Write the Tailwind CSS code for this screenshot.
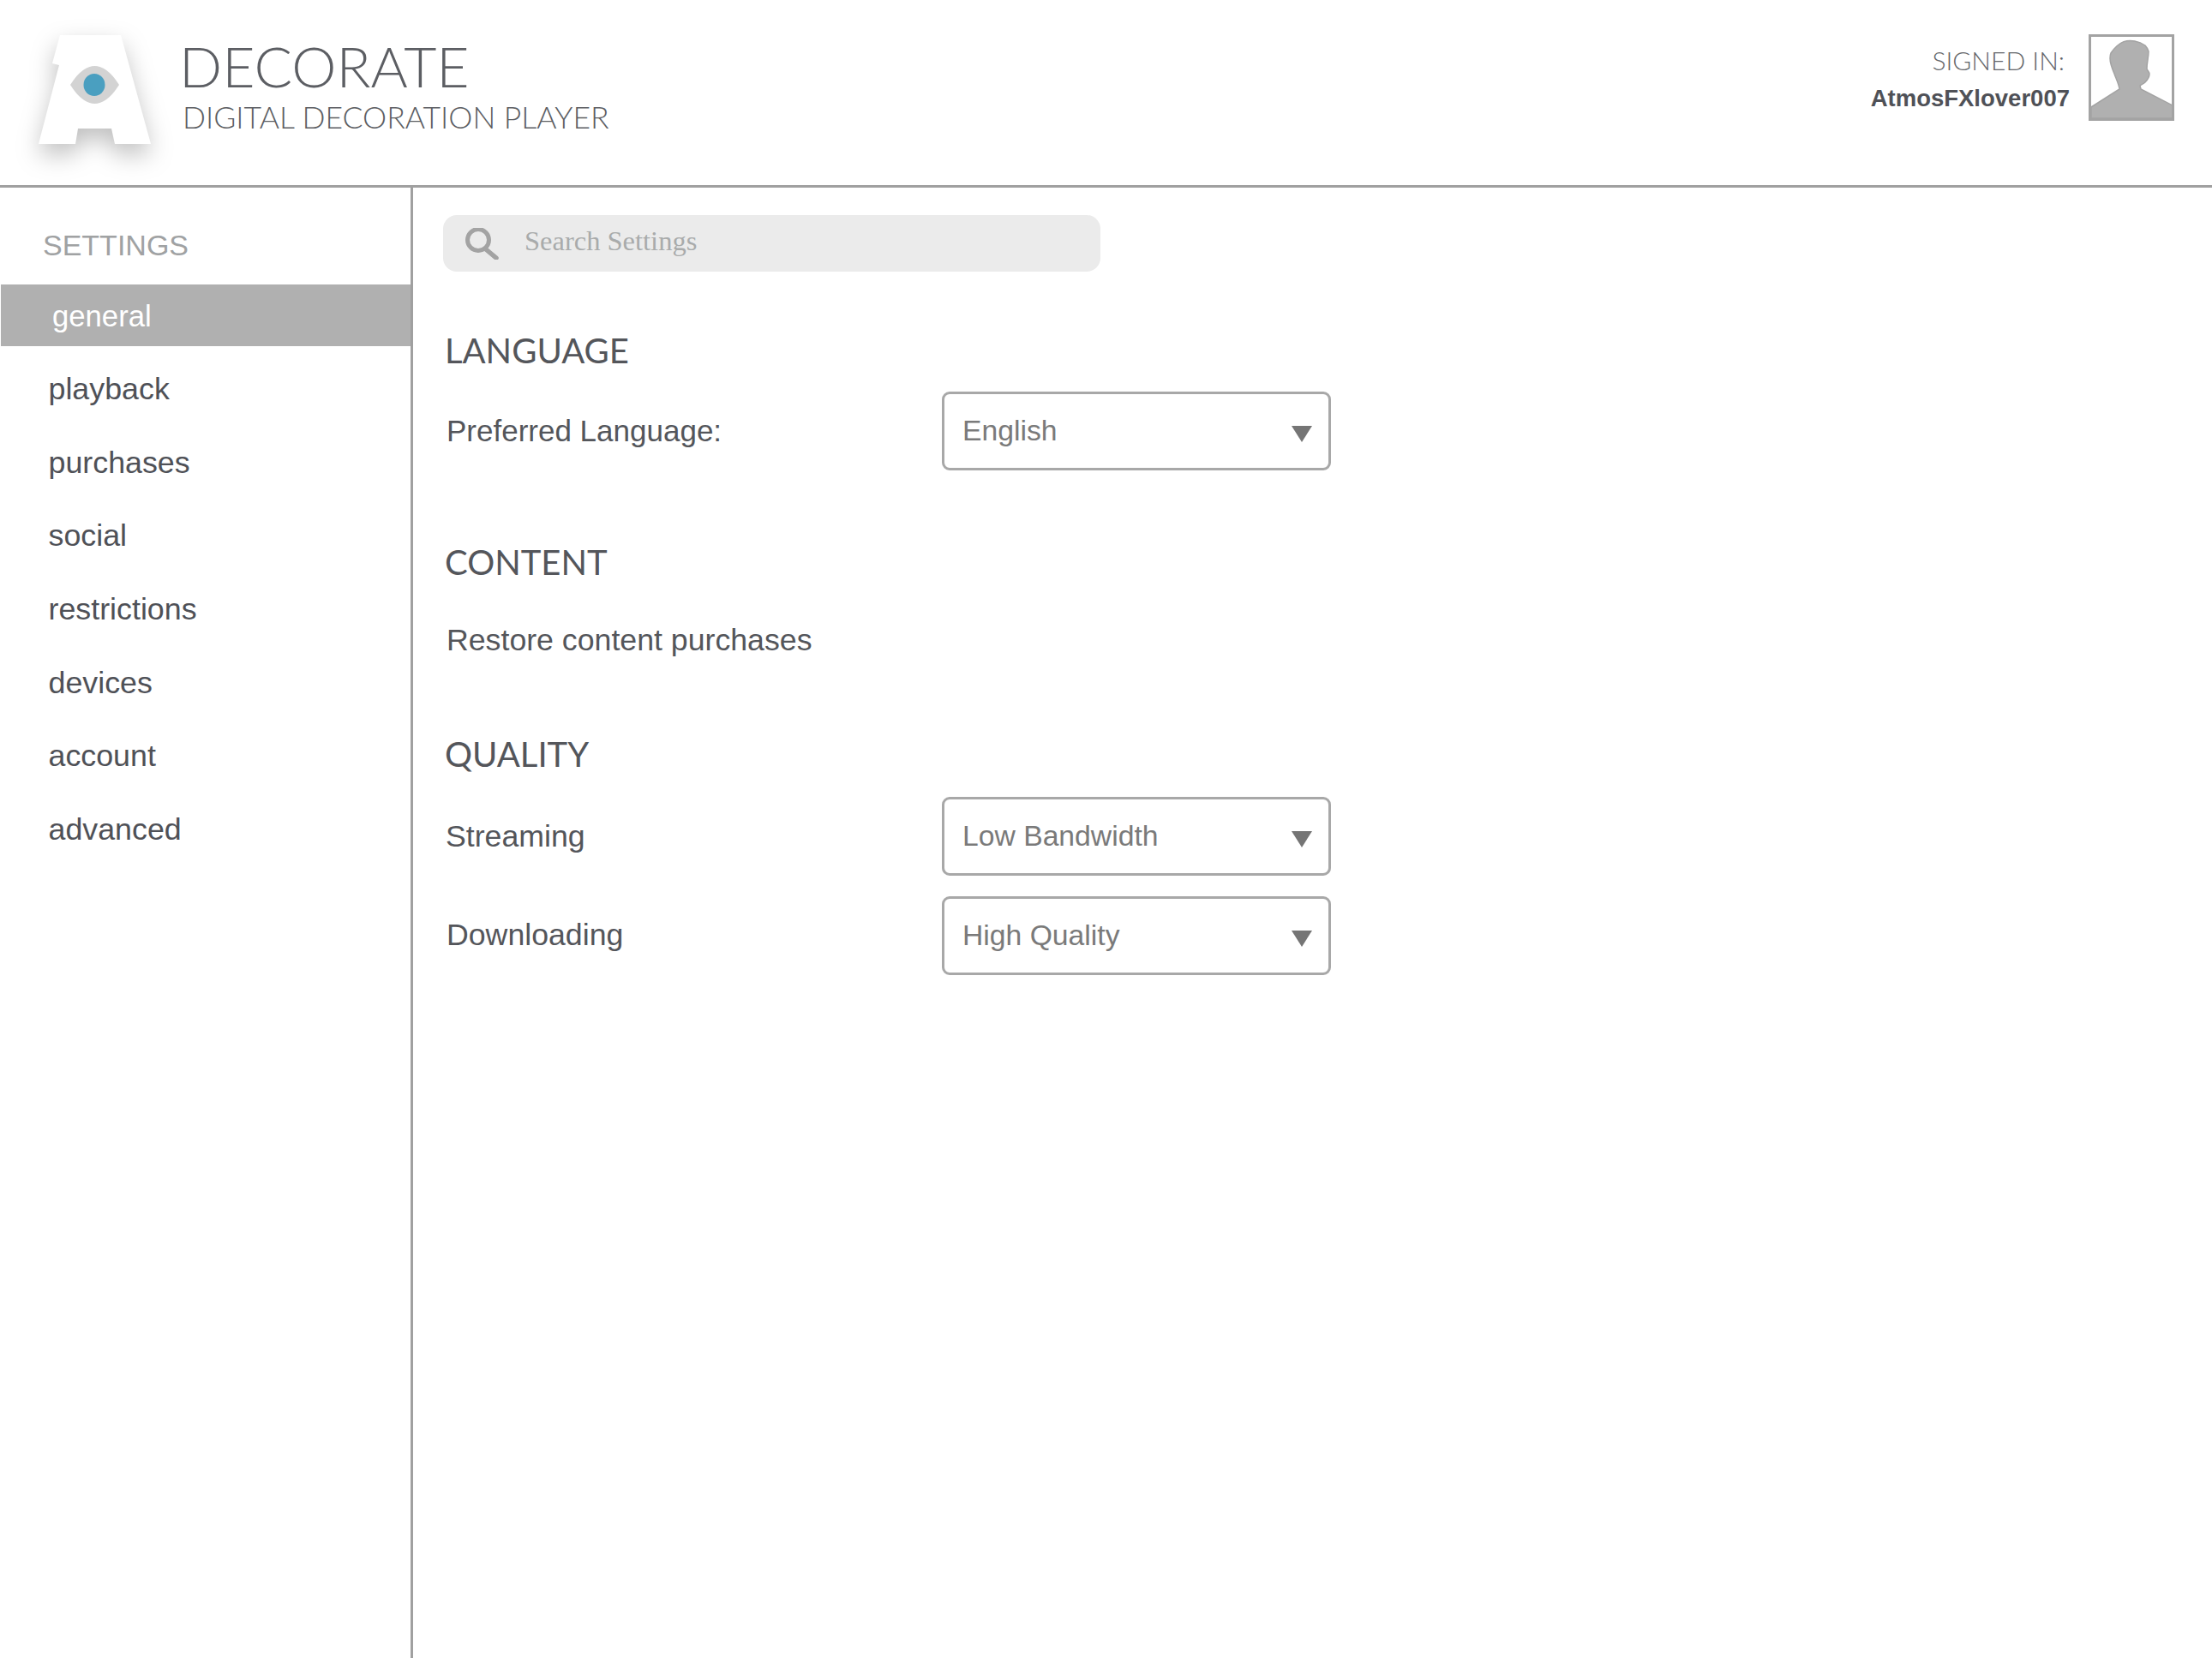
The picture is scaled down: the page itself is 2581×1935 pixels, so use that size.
<!doctype html>
<html><head><meta charset="utf-8"><script src="https://cdn.jsdelivr.net/npm/@tailwindcss/browser@4"></script></head>
<body class="bg-white">
<div class="w-[2581px] h-[1935px] flex flex-col overflow-hidden bg-white font-['Liberation_Sans',sans-serif] text-[#54565b]">
  <header class="h-[219px] shrink-0 border-b-[3px] border-[#a0a0a0] flex items-start">
    <div class="w-[209px] shrink-0 pt-[41px] pl-[45px]">
      <svg width="131" height="127" viewBox="0 0 131 127" class="overflow-visible drop-shadow-[0_12px_14px_rgba(0,0,0,0.25)]">
        <path d="M25 0H96L131 127H89L85 109H46L43 127H0L24 35L16 33Z" fill="#fff"/>
        <path d="M37 58C47 42 57 36 65.5 36C74 36 84 42 94 58C84 74 74 80 65.5 80C57 80 47 74 37 58Z" fill="#d3d3d3"/>
        <ellipse cx="65" cy="58" rx="12.5" ry="13" fill="#4a9fc0"/>
      </svg>
    </div>
    <div class="pt-[38px] font-['Lato',sans-serif] font-light">
      <div class="text-[66px] leading-[78px] text-[#5c5e63]">DECORATE</div>
      <div class="text-[35.5px] leading-[42px] text-[#5c5e63] pl-[4px]">DIGITAL DECORATION PLAYER</div>
    </div>
    <div class="ml-auto pt-[40px] pr-[44px] flex items-start gap-[22px]">
      <div class="flex flex-col items-end pt-[10px]">
        <div class="font-['Lato',sans-serif] font-light text-[30px] leading-[40px] pr-[6px] text-[#64666a]">SIGNED IN:</div>
        <div class="font-bold text-[27.5px] leading-[38px] text-[#4f5157] mt-[6px]">AtmosFXlover007</div>
      </div>
      <div class="w-[100px] h-[101px] border-[3px] border-[#a3a3a3] bg-white">
        <svg viewBox="0 0 94 95" width="94" height="95"><path d="M0 82L33 61C32 54 29 49 27 43C24 36 22 31 22 25C22 22 22 21 23 19C27 13 32 8 38 5.6C46 3 56 5 63 10C65 12 66 14 67 17C67 24 65 30 65 37C65 39 68 41 68 43C68 47 66 50 63 53C61 55 58 56 57 57L58 61L95 80V95H0Z" fill="#b0b0b0" stroke="#a3a3a3" stroke-width="1.5"/></svg>
      </div>
    </div>
  </header>
  <div class="flex flex-1 min-h-0">
    <aside class="w-[482px] shrink-0 border-r-[3px] border-[#a0a0a0]">
      <div class="h-[113px] pl-[50px] pt-[46px] text-[34px] leading-[42px] text-[#a0a2a3]">SETTINGS</div>
      <nav class="text-[35.8px] leading-[42px] text-[#4f5157]">
        <div class="h-[72px] ml-px bg-[#b0b0b0] text-white text-[34.7px] flex items-center pl-[60px] pt-[2px]">general</div>
        <div class="h-[85.6px] flex items-center pl-[56.5px] mt-[7px] pt-[1px]">playback</div>
        <div class="h-[85.6px] flex items-center pl-[56.5px] pt-[1px]">purchases</div>
        <div class="h-[85.6px] flex items-center pl-[56.5px] pt-[1px]">social</div>
        <div class="h-[85.6px] flex items-center pl-[56.5px] pt-[1px]">restrictions</div>
        <div class="h-[85.6px] flex items-center pl-[56.5px] pt-[1px]">devices</div>
        <div class="h-[85.6px] flex items-center pl-[56.5px] pt-[1px]">account</div>
        <div class="h-[85.6px] flex items-center pl-[56.5px] pt-[1px]">advanced</div>
      </nav>
    </aside>
    <main class="flex-1 pl-[35px]">
      <div class="w-[767px] h-[66px] mt-[32px] rounded-[16px] bg-[#ebebeb] flex items-center pl-[26px] gap-[30px]">
        <svg width="39" height="37" viewBox="0 0 39 37" fill="none" stroke="#a3a3a3"><circle cx="15" cy="14" r="12.5" stroke-width="5"/><path d="M24 25L36 35" stroke-width="5.5" stroke-linecap="round"/></svg>
        <span class="font-['Liberation_Serif',serif] text-[32.5px] text-[#a9abab] mb-[5px]">Search Settings</span>
      </div>
      <h2 class="font-['Lato',sans-serif] text-[40px] leading-[46px] font-normal mt-[69px] pl-[2px]">LANGUAGE</h2>
      <div class="flex items-center mt-[25px] h-[92px]">
        <div class="w-[582px] pl-[4px] text-[35px]">Preferred Language:</div>
        <div class="w-[454px] h-[92px] border-[3px] border-[#a8a8a8] rounded-[9px] flex items-center justify-between pl-[21px] pr-[19px] text-[33.7px] text-[#7a7a7a]"><span class="mb-[2px]">English</span><svg width="24" height="19" viewBox="0 0 24 19" class="mt-[6px]"><path d="M0 0H24L12 19Z" fill="#757575"/></svg></div>
      </div>
      <h2 class="font-['Lato',sans-serif] text-[40px] leading-[46px] font-normal mt-[84px] pl-[2px]">CONTENT</h2>
      <div class="pl-[4px] text-[35.7px] leading-[42px] mt-[47px]">Restore content purchases</div>
      <h2 class="font-['Lato',sans-serif] text-[40px] leading-[46px] font-normal mt-[89px] pl-[2px]">QUALITY</h2>
      <div class="flex items-center mt-[27px] h-[92px]">
        <div class="w-[582px] pl-[3px] text-[35.7px] pt-[1px]">Streaming</div>
        <div class="w-[454px] h-[92px] border-[3px] border-[#a8a8a8] rounded-[9px] flex items-center justify-between pl-[21px] pr-[19px] text-[33.7px] text-[#7a7a7a]"><span class="mb-[2px]">Low Bandwidth</span><svg width="24" height="19" viewBox="0 0 24 19" class="mt-[6px]"><path d="M0 0H24L12 19Z" fill="#757575"/></svg></div>
      </div>
      <div class="flex items-center mt-[24px] h-[92px]">
        <div class="w-[582px] pl-[4px] text-[35.7px]">Downloading</div>
        <div class="w-[454px] h-[92px] border-[3px] border-[#a8a8a8] rounded-[9px] flex items-center justify-between pl-[21px] pr-[19px] text-[33.7px] text-[#7a7a7a]"><span class="mb-[2px]">High Quality</span><svg width="24" height="19" viewBox="0 0 24 19" class="mt-[6px]"><path d="M0 0H24L12 19Z" fill="#757575"/></svg></div>
      </div>
    </main>
  </div>
</div>
</body></html>
